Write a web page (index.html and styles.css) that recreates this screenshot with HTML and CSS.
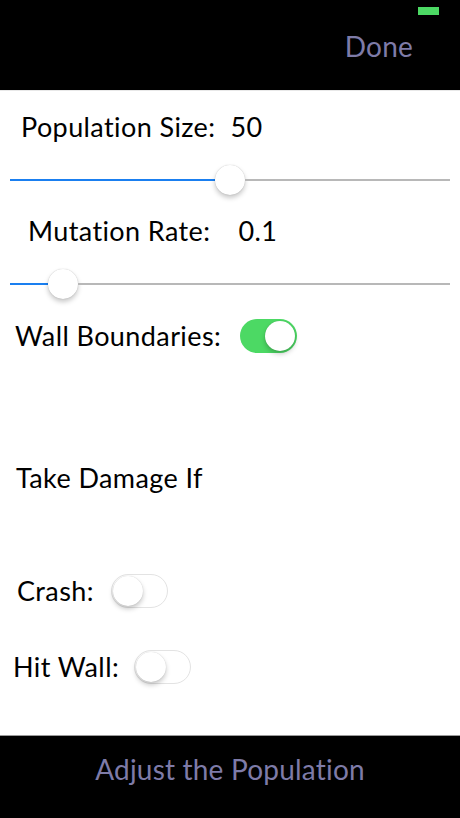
FILE: index.html
```html
<!DOCTYPE html>
<html>
<head>
<meta charset="utf-8">
<link rel="stylesheet" href="styles.css">
</head>
<body>
<div class="page">
  <header class="topbar">
    <div class="status"><span class="battery"></span></div>
    <div class="nav"><span class="done">Done</span></div>
  </header>
  <main class="content">
    <div class="label pop"><span>Population Size:</span><span class="val pop-val">50</span></div>
    <div class="slider s1">
      <div class="fill" style="width:205px"></div>
      <div class="thumb"></div>
      <div class="rest"></div>
    </div>
    <div class="label mut"><span>Mutation Rate:</span><span class="val mut-val">0.1</span></div>
    <div class="slider s2">
      <div class="fill" style="width:38px"></div>
      <div class="thumb"></div>
      <div class="rest"></div>
    </div>
    <div class="row wall"><span class="label">Wall Boundaries:</span><span class="toggle on"><span class="knob"></span></span></div>
    <div class="label take">Take Damage If</div>
    <div class="row crash"><span class="label">Crash:</span><span class="toggle off"><span class="knob"></span></span></div>
    <div class="row hit"><span class="label">Hit Wall:</span><span class="toggle off"><span class="knob"></span></span></div>
  </main>
  <footer class="bottombar"><span class="title">Adjust the Population</span></footer>
</div>
</body>
</html>
```
FILE: styles.css
```css
html, body { margin: 0; padding: 0; background: #fff; }
body { font-family: Lato, "Open Sans", sans-serif; }
.page { width: 460px; height: 818px; display: flex; flex-direction: column; overflow: hidden; }

.topbar { background: #000; height: 90px; border-bottom: 1px solid #e8e8e8; display: flex; flex-direction: column; }
.status { height: 20px; display: flex; justify-content: flex-end; align-items: flex-start; padding: 7px 21px 0 0; box-sizing: border-box; }
.battery { display: block; width: 21px; height: 8px; background: #4cd964; }
.nav { display: flex; justify-content: flex-end; padding-right: 47px; padding-top: 9px; }
.done { font-size: 28px; line-height: 34px; color: #7e7ba8; letter-spacing: 0.2px; }

.content { flex: 1; display: flex; flex-direction: column; padding-top: 21px; }
.label { font-size: 27px; line-height: 30px; color: #000; white-space: nowrap; letter-spacing: 0.4px; }
.pop { margin-left: 21px; display: flex; }
.pop-val { margin-left: 15px; }
.mut { margin-left: 28px; margin-top: 21px; display: flex; }
.mut-val { margin-left: 28px; }

.slider { display: flex; align-items: center; height: 30px; margin: 0 10px; }
.s1 { margin-top: 23px; }
.s2 { margin-top: 23px; }
.fill { height: 2px; background: #1a7ff0; }
.rest { flex: 1; height: 2px; background: #b8b8b8; }
.thumb { width: 30px; height: 30px; border-radius: 50%; background: #fff; box-shadow: 0 3px 5px rgba(0,0,0,0.22), 0 0 1px rgba(0,0,0,0.25); flex: none; }

.row { display: flex; align-items: center; height: 34px; }
.wall { margin-top: 20px; margin-left: 15px; }
.wall .toggle { margin-left: 19px; }
.take { margin-top: 110px; margin-left: 16px; }
.crash { margin-top: 81px; margin-left: 17px; }
.crash .toggle { margin-left: 17px; }
.hit { margin-top: 42px; margin-left: 13px; }
.hit .toggle { margin-left: 15px; }

.toggle { display: flex; align-items: center; width: 57px; height: 34px; border-radius: 17px; box-sizing: border-box; flex: none; }
.toggle.on { background: #4cd964; justify-content: flex-end; padding: 2px; }
.toggle.off { background: #fff; border: 1.5px solid #e3e3e3; padding: 1px; }
.knob { width: 30px; height: 30px; border-radius: 50%; background: #fff; box-shadow: 0 3px 5px rgba(0,0,0,0.22), 0 0 1px rgba(0,0,0,0.2); }

.bottombar { height: 83px; background: #000; border-top: 1px solid #9a9a9a; box-sizing: border-box; display: flex; justify-content: center; padding-top: 16px; }
.title { font-size: 28px; line-height: 34px; color: #7e7ba8; letter-spacing: 0.2px; }
```
